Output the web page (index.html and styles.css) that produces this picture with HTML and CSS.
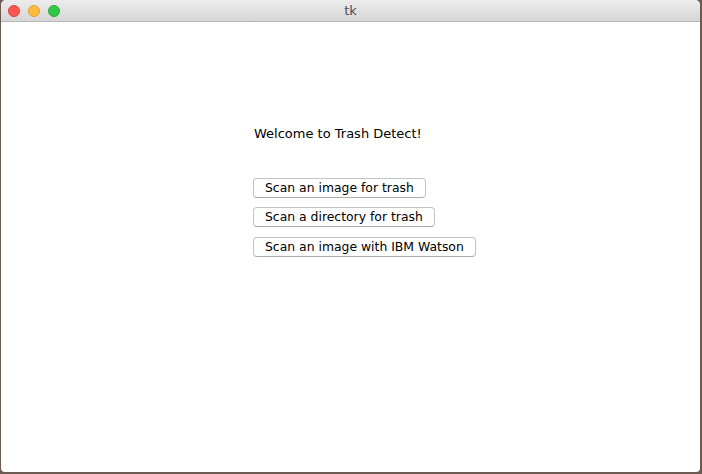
FILE: index.html
```html
<!DOCTYPE html>
<html>
<head>
<meta charset="utf-8">
<link rel="stylesheet" href="styles.css">
</head>
<body>
<div class="desktop">
  <div class="window">
    <div class="titlebar">
      <div class="lights">
        <span class="light red"></span>
        <span class="light yellow"></span>
        <span class="light green"></span>
      </div>
      <div class="title">tk</div>
    </div>
    <div class="content">
      <div class="panel">
        <div class="welcome">Welcome to Trash Detect!</div>
        <div class="buttons">
          <button class="btn">Scan an image for trash</button>
          <button class="btn">Scan a directory for trash</button>
          <button class="btn">Scan an image with IBM Watson</button>
        </div>
      </div>
    </div>
  </div>
</div>
</body>
</html>
```
FILE: styles.css
```css
html, body {
  margin: 0;
  padding: 0;
  width: 702px;
  height: 474px;
  overflow: hidden;
}
.desktop {
  width: 702px;
  height: 474px;
  background: #6b5a50;
  padding: 0 2px 2px 1px;
  box-sizing: border-box;
}
.window {
  height: 100%;
  display: flex;
  flex-direction: column;
  background: #fff;
  border-radius: 5px 5px 4px 4px;
  overflow: hidden;
  font-family: "DejaVu Sans", "Liberation Sans", sans-serif;
}
.titlebar {
  height: 22px;
  flex: none;
  position: relative;
  background: linear-gradient(#ececec, #d6d6d6);
  border-bottom: 1px solid #b8b8b8;
  box-sizing: border-box;
  display: flex;
  align-items: center;
  justify-content: center;
}
.lights {
  position: absolute;
  left: 7px;
  top: 5px;
  display: flex;
  gap: 8px;
}
.light {
  width: 12px;
  height: 12px;
  border-radius: 50%;
  box-sizing: border-box;
}
.red { background: #fc5753; border: 1px solid #df3e3a; }
.yellow { background: #fdbc40; border: 1px solid #de9f34; }
.green { background: #33c748; border: 1px solid #27aa35; }
.title {
  font-size: 13px;
  color: #4d4d4d;
}
.content {
  flex: 1;
  padding: 104px 0 0 252px;
}
.welcome {
  font-size: 13px;
  color: #000;
  line-height: 16px;
  padding-left: 1px;
}
.buttons {
  margin-top: 35.5px;
  display: flex;
  flex-direction: column;
  align-items: flex-start;
  gap: 9.5px;
}
.btn {
  font-family: "DejaVu Sans", "Liberation Sans", sans-serif;
  font-size: 12.4px;
  color: #000;
  background: #fff;
  border: 1px solid #c4c4c4;
  border-bottom-color: #acacac;
  border-radius: 4px;
  height: 20px;
  padding: 0 11px;
  line-height: 18px;
  margin: 0;
}
```
